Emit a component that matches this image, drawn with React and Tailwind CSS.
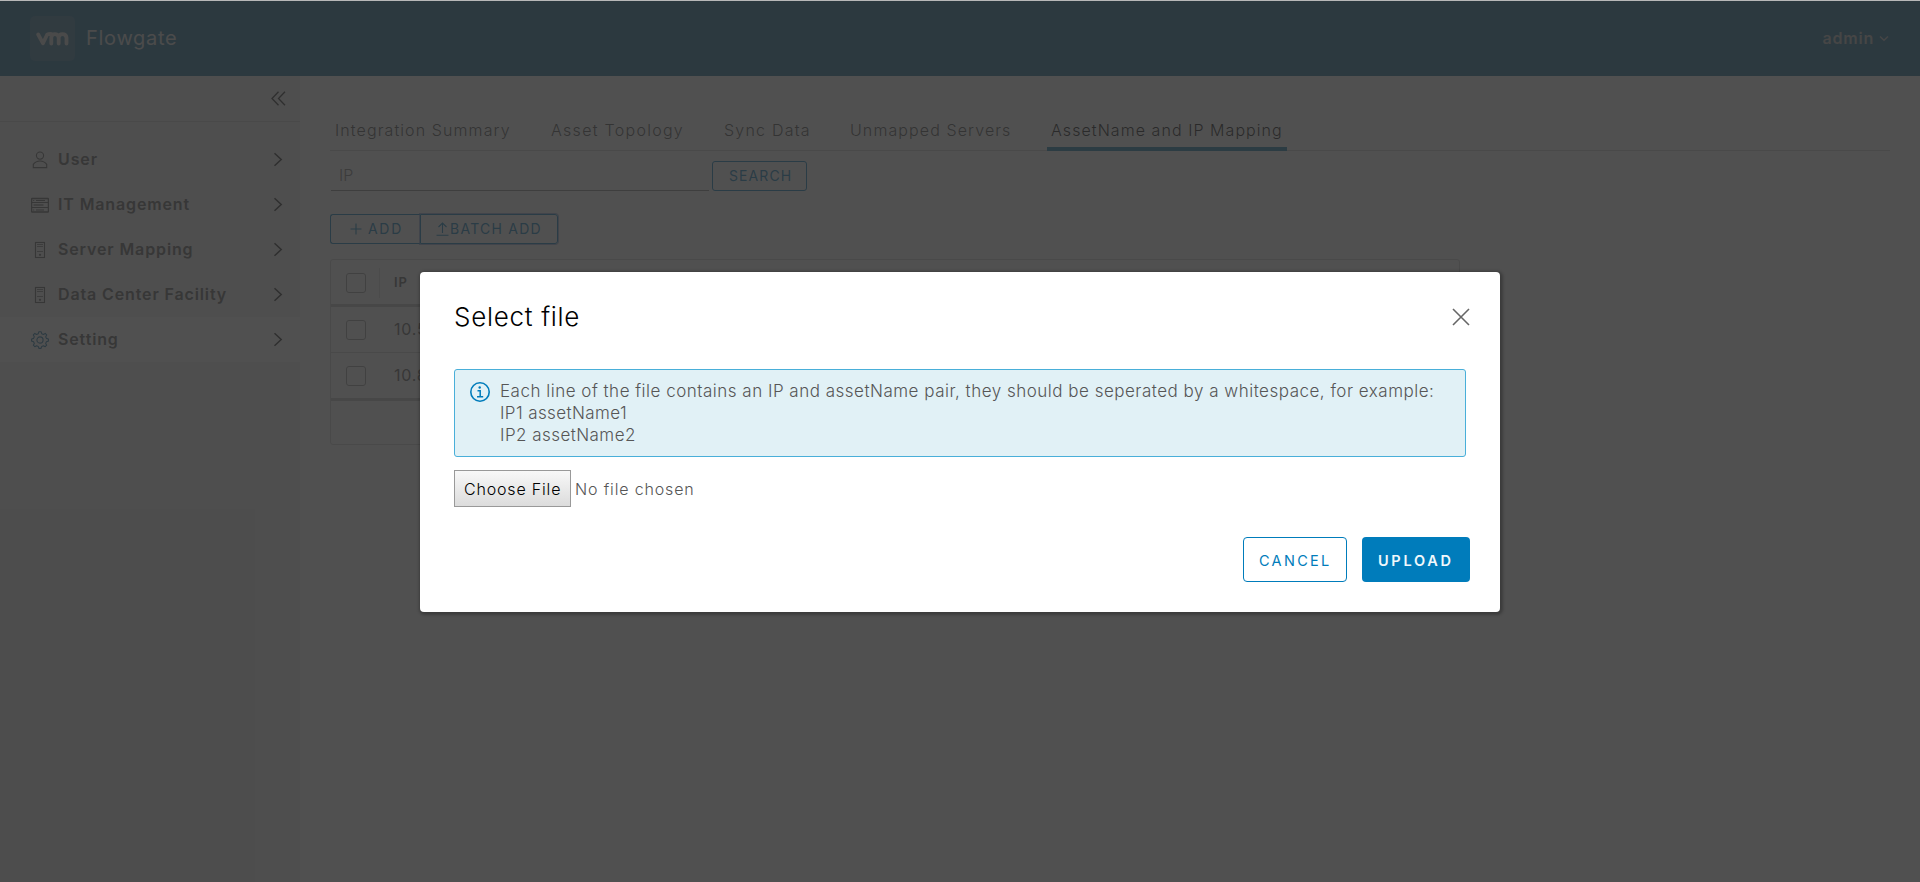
import React from "react";

function UserIcon() {
  return (
    <svg width="18" height="18" viewBox="0 0 18 18" fill="none" stroke="currentColor" strokeWidth="1.1">
      <circle cx="9" cy="4.6" r="3.6" />
      <path d="M2.3 16.6v-3.2c1.6-2.2 4-3.4 6.7-3.4s5.1 1.2 6.7 3.4v3.2z" />
    </svg>
  );
}

function RackIcon() {
  return (
    <svg width="18" height="18" viewBox="0 0 18 18" fill="none" stroke="currentColor">
      <rect x="0.6" y="2.5" width="16.8" height="13.5" rx="0.5" strokeWidth="1.3" />
      <path d="M1 6.5h16M1 11.5h16" strokeWidth="1" />
      <path d="M5 4.5h9M5 14h8" strokeWidth="1" />
      <path d="M2.5 9h10" strokeWidth="2" opacity="0.6" />
      <path d="M2.2 4.5h1M2.2 14h1" strokeWidth="1" />
    </svg>
  );
}

function HostIcon() {
  return (
    <svg width="18" height="18" viewBox="0 0 18 18" fill="none" stroke="currentColor">
      <rect x="4.5" y="1.5" width="9" height="15" strokeWidth="1.1" />
      <path d="M6 3.5h6M6 5.5h6M6 10.5h6" strokeWidth="0.9" opacity="0.8" />
      <circle cx="9" cy="13.8" r="1.1" fill="currentColor" stroke="none" />
    </svg>
  );
}

function GearIcon() {
  return (
    <svg width="18" height="18" viewBox="0 0 18 18" fill="none" stroke="currentColor" strokeWidth="1.1" strokeLinejoin="round">
      <path d="M7.3 2.7L7.9 0.7h2.2l0.6 2 1.7 0.7 1.8-1 1.5 1.5-1 1.8 0.7 1.7 2 0.6v2.1l-2 0.6-0.7 1.7 1 1.8-1.5 1.5-1.8-1-1.7 0.7-0.6 2H7.9l-0.6-2-1.7-0.7-1.8 1-1.5-1.5 1-1.8-0.7-1.7-2-0.6V8l2-0.6 0.7-1.7-1-1.8 1.5-1.5 1.8 1z" />
      <circle cx="9" cy="9" r="3.1" />
    </svg>
  );
}

const menu = [
  { label: "User", Icon: UserIcon },
  { label: "IT Management", Icon: RackIcon },
  { label: "Server Mapping", Icon: HostIcon },
  { label: "Data Center Facility", Icon: HostIcon },
  { label: "Setting", Icon: GearIcon, active: true },
];

const tabs = [
  { label: "Integration Summary", size: "w-[216px] tracking-[1.1px]" },
  { label: "Asset Topology", size: "w-[173px] tracking-[1.28px]" },
  { label: "Sync Data", size: "w-[126px] tracking-[1.22px]" },
  { label: "Unmapped Servers", size: "w-[197px] tracking-[1.1px]" },
];

function Header() {
  return (
    <header className="flex h-[75px] shrink-0 items-center bg-[#106690] pl-[30px] pr-[31px] text-[#fafafa]">
      <div className="flex size-[45px] items-center justify-center rounded-[5px] bg-[#2f7194]">
        <svg width="33" height="14" viewBox="0 0 33 14" fill="none" stroke="#d5d5d5" strokeWidth="3.8" strokeLinecap="round" strokeLinejoin="round">
          <path d="M2.2 2.5L7 11.3 11.2 2.5Q12 2 15 2M15.3 11.5V5.6Q15.5 2.2 18.8 2.2T22.7 5.6V11.5M22.7 5.6Q23 2.2 26.5 2.2T30.5 5.6V11.5" />
        </svg>
      </div>
      <span className="-mt-0.5 ml-[11px] text-[20px] tracking-[0.7px] text-[#dedede]">Flowgate</span>
      <div className="ml-auto flex items-center text-[16px] font-semibold text-[#b8b8b8]">
        <span className="-mt-0.5 tracking-[0.8px]">admin</span>
        <svg className="ml-[5px]" width="10" height="7" viewBox="0 0 10 7" fill="none" stroke="currentColor" strokeWidth="1.4">
          <path d="M1 1.5L5 5.3 9 1.5" />
        </svg>
      </div>
    </header>
  );
}

function Sidebar() {
  return (
    <nav className="flex w-[300px] shrink-0 flex-col bg-[#eee]">
      <div className="flex h-[46px] items-center justify-end border-b border-[#ccc] pr-[14px]">
        <svg width="15" height="15" viewBox="0 0 15 15" fill="none" stroke="#222" strokeWidth="1.3">
          <path d="M7.5 0.8L1 7.5l6.5 6.7M14 0.8L7.5 7.5l6.5 6.7" />
        </svg>
      </div>
      <div className="flex flex-col pt-[15px]">
        {menu.map(({ label, Icon, active }) => (
          <div key={label} className={`flex h-[45px] items-center pl-[31px] pr-[17px] text-[#565656] ${active ? "bg-white" : ""}`}>
            <span className={active ? "text-[#1b6fa0]" : ""}>
              <Icon />
            </span>
            <span className="-mt-px ml-[9px] whitespace-nowrap text-[16px] font-semibold tracking-[0.87px]">{label}</span>
            <svg className="-mt-px ml-auto" width="10" height="15" viewBox="0 0 10 15" fill="none" stroke="#222" strokeWidth="1.5">
              <path d="M1.5 1.2L8.2 7.5 1.5 13.8" />
            </svg>
          </div>
        ))}
      </div>
    </nav>
  );
}

function Checkbox() {
  return <span className="block size-5 rounded-[3px] border border-[#999]" />;
}

function Grid() {
  return (
    <div className="mt-[15px] w-[1130px] rounded-[3px] border border-[#ccc] bg-white text-[#565656]">
      <div className="flex h-[44px] items-center pl-[15px] pt-[2px]">
        <Checkbox />
        <span className="ml-[13px] h-[30px] w-px bg-[#ddd]" />
        <span className="-mt-px ml-[14px] text-[13px] font-semibold tracking-[0.8px]">IP</span>
      </div>
      <div className="flex h-[49px] items-center border-b border-t-[3px] border-b-[#ccc] border-t-[#c4c4c4] pl-[15px] text-[16px]">
        <Checkbox />
        <span className="-mt-0.5 ml-[28px] tracking-[0.8px]">10.5</span>
      </div>
      <div className="flex h-[45px] items-center pl-[15px] text-[16px]">
        <Checkbox />
        <span className="-mt-0.5 ml-[28px] tracking-[0.8px]">10.8</span>
      </div>
      <div className="h-[46px] border-t-[3px] border-[#c4c4c4]" />
    </div>
  );
}

function Content() {
  return (
    <main className="flex grow flex-col bg-white pl-[30px] pr-[30px] pt-[35px]">
      <ul className="flex h-10 items-center whitespace-nowrap pl-[5px] text-[16px] font-light text-[#444] shadow-[inset_0_-1px_0_#ccc]">
        {tabs.map((t) => (
          <li key={t.label} className={`pb-[2px] ${t.size}`}>{t.label}</li>
        ))}
        <li className="flex h-10 w-[240px] items-center pl-1 pb-[2px] tracking-[1.06px] text-black shadow-[inset_0_-4px_0_#1079aa]">AssetName and IP Mapping</li>
      </ul>

      <div className="flex h-10 items-end">
        <div className="ml-px flex h-[30px] w-[378px] items-center border-b border-[#888] pl-[8px] pb-px text-[16px] font-light text-[#777]">IP</div>
        <button className="ml-[3px] h-[30px] w-[95px] rounded-[3px] border border-[#0079b8] pl-[16px] pb-[2px] text-left text-[14px] tracking-[1.1px] text-[#0079b8]">SEARCH</button>
      </div>

      <div className="mt-[23px] flex text-[14px] text-[#0079b8]">
        <button className="flex h-[30px] w-[90px] items-center rounded-l-[3px] border border-r-0 border-[#0079b8] pl-[19px] pb-px">
          <svg width="12" height="12" viewBox="0 0 12 12" stroke="currentColor" strokeWidth="1.1">
            <path d="M6 0.5v11M0.5 6h11" />
          </svg>
          <span className="ml-[6px] tracking-[1.7px]">ADD</span>
        </button>
        <button className="flex h-[30px] w-[138px] items-center rounded-r-[3px] border border-[#0079b8] pl-[15px] pb-px shadow-[0_0_0_1px_rgba(90,121,192,0.6)]">
          <svg width="13" height="14" viewBox="0 0 13 14" fill="none" stroke="currentColor" strokeWidth="1.1">
            <path d="M6.5 11V1M2.5 5L6.5 1l4 4M0.5 13.3h12" />
          </svg>
          <span className="ml-px whitespace-nowrap tracking-[1.25px]">BATCH ADD</span>
        </button>
      </div>

      <Grid />
    </main>
  );
}

function Modal() {
  return (
    <div className="flex h-[340px] w-[1080px] flex-col rounded-[4px] bg-white pl-[34px] pr-[30px] shadow-[1px_1px_3px_2px_rgba(0,0,0,0.25)]">
      <div className="flex h-[90px] items-center justify-between">
        <h3 className="-mt-0.5 text-[26px] font-light tracking-[0.7px] text-black">Select file</h3>
        <svg width="18" height="18" viewBox="0 0 18 18" stroke="#666" strokeWidth="1.6">
          <path d="M1 1l16 16M17 1L1 17" />
        </svg>
      </div>
      <div className="mt-[7px] flex h-[88px] w-[1012px] rounded-[3px] border border-[#49afd9] bg-[#e1f1f6] pl-[14px] pt-[10px]">
        <svg className="mt-px shrink-0" width="22" height="22" viewBox="0 0 22 22" fill="none" stroke="#007cbb">
          <circle cx="11" cy="11" r="9.2" strokeWidth="1.6" />
          <circle cx="10.7" cy="6.5" r="1.2" fill="#007cbb" stroke="none" />
          <path d="M8.5 9.7h2.7v6M8 15.7h6.2" strokeWidth="1.5" />
        </svg>
        <div className="ml-[9px] whitespace-nowrap text-[17px] font-light leading-[22px] text-[#565656]">
          <p className="tracking-[0.5px]">Each line of the file contains an IP and assetName pair, they should be seperated by a whitespace, for example:</p>
          <p className="tracking-[0.4px]">IP1 assetName1</p>
          <p className="tracking-[0.45px]">IP2 assetName2</p>
        </div>
      </div>
      <div className="mt-[13px] flex h-[37px] items-center whitespace-nowrap text-[16px] font-light">
        <button className="h-[37px] w-[117px] border border-[#999] bg-linear-to-b from-[#f8f8f8] to-[#dcdcdc] pl-[9px] text-left tracking-[0.82px] text-black">Choose File</button>
        <span className="ml-[4px] tracking-[0.85px] text-[#565656]">No file chosen</span>
      </div>
      <div className="mt-[30px] flex justify-end gap-[15px] text-[14.5px]">
        <button className="h-[45px] w-[104px] rounded-[4px] border border-[#007cbb] pl-[15px] pt-[3px] text-left tracking-[2.3px] text-[#007cbb]">CANCEL</button>
        <button className="h-[45px] w-[108px] rounded-[4px] bg-[#007cbb] pl-[16px] pt-[3px] text-left font-semibold tracking-[2.7px] text-[#f0f8fc]">UPLOAD</button>
      </div>
    </div>
  );
}

export default function App() {
  return (
    <div className="flex h-[882px] w-full flex-col overflow-hidden bg-[#b8b8b8] pt-px font-['Inter','Liberation_Sans',sans-serif]">
      <div className="relative flex grow flex-col">
        <Header />
        <div className="flex grow">
          <Sidebar />
          <Content />
        </div>
        <div className="absolute inset-0 flex items-start justify-center bg-[#313131]/85 pt-[271px]">
          <Modal />
        </div>
      </div>
    </div>
  );
}
